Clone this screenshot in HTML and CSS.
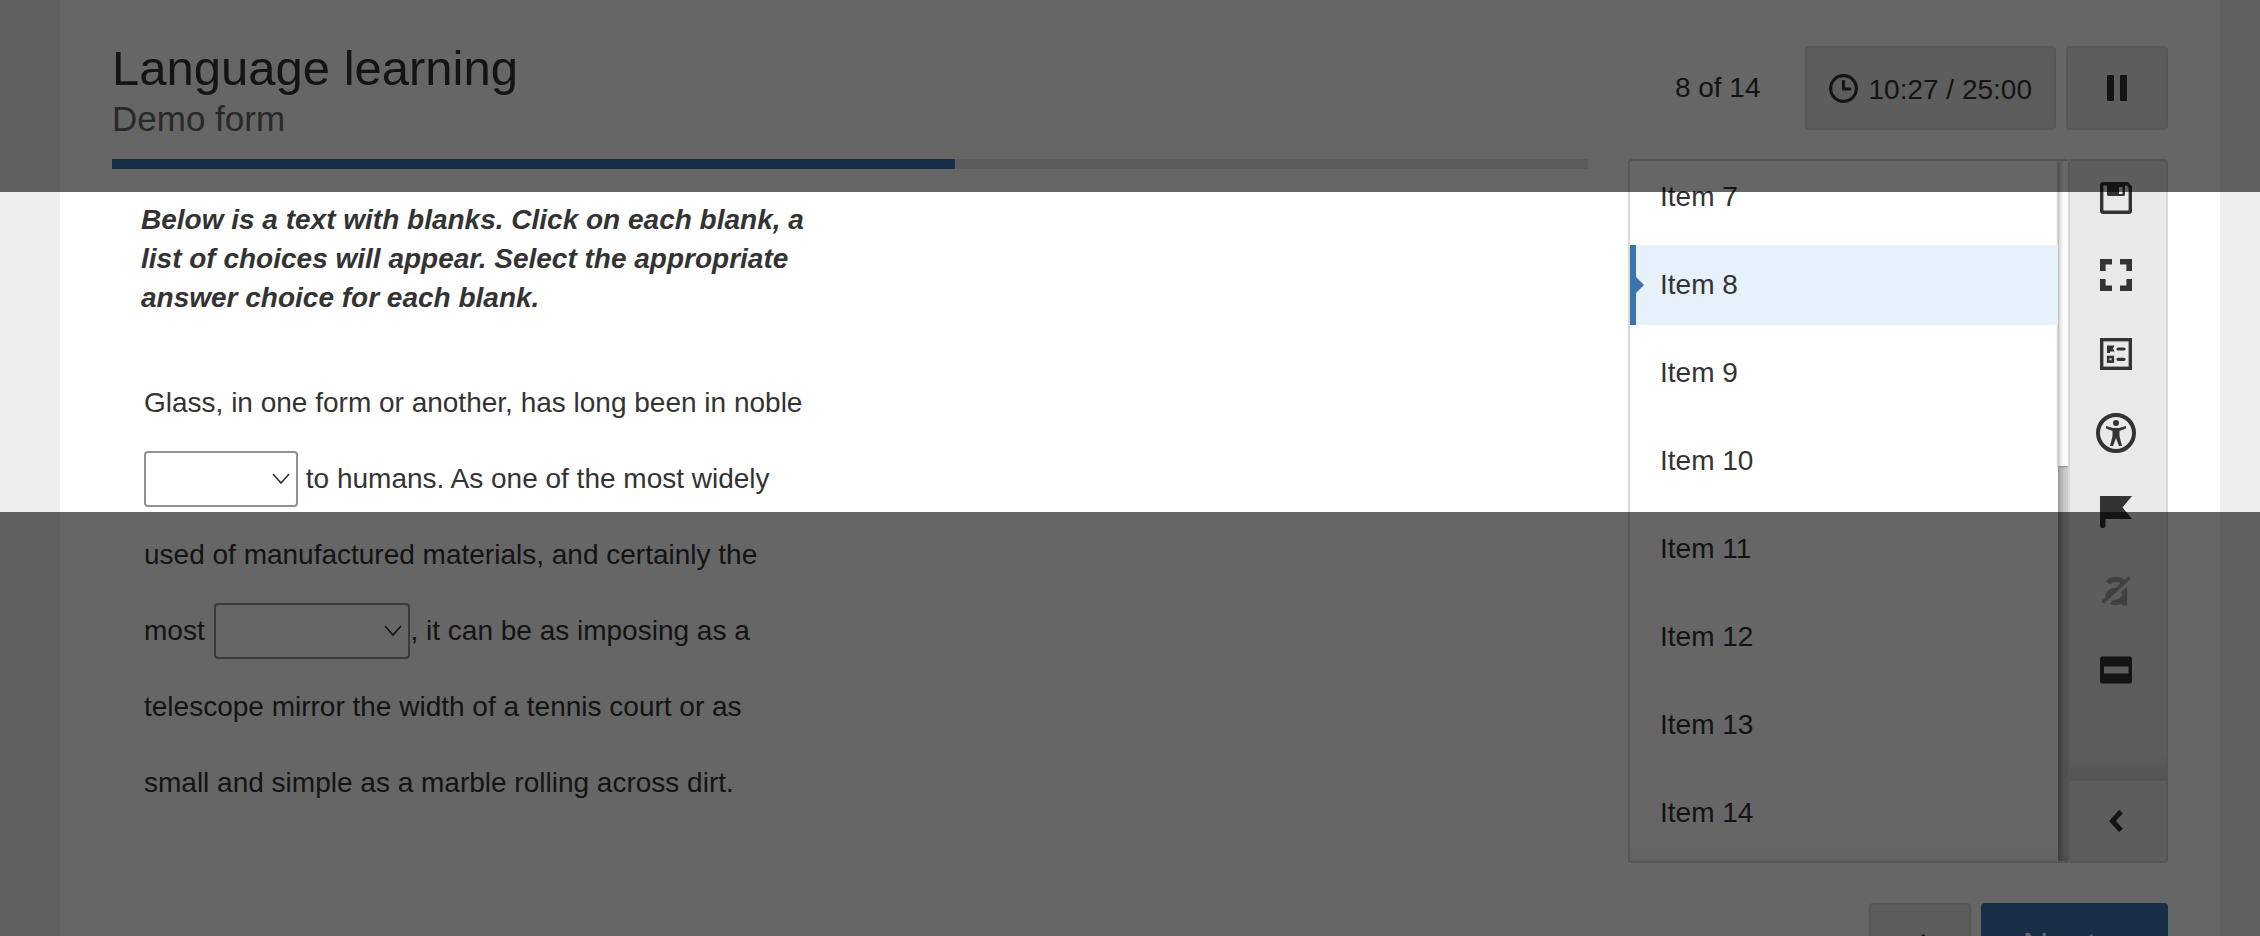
FILE: index.html
```html
<!DOCTYPE html>
<html lang="en">
<head>
<meta charset="utf-8">
<title>Language learning</title>
<link rel="stylesheet" href="styles.css">
</head>
<body>
<div class="page">
  <header class="header">
    <div class="titles">
      <h1 class="title">Language learning</h1>
      <p class="subtitle">Demo form</p>
    </div>
    <div class="status">
      <span class="counter">8 of 14</span>
      <div class="box timer">
        <svg class="clock" viewBox="0 0 28 28" fill="none" stroke="currentColor" stroke-width="3"><circle cx="14" cy="14" r="12.4"/><path d="M14 6v8.5h7.5"/></svg>
        <span class="time">10:27 / 25:00</span>
      </div>
      <button class="box pause" type="button" aria-label="Pause">
        <svg width="20" height="26" viewBox="0 0 20 26" fill="currentColor"><rect width="7" height="26" rx="1"/><rect x="13" width="7" height="26" rx="1"/></svg>
      </button>
    </div>
  </header>

  <div class="body">
    <main class="content">
      <div class="progress"><div class="progress-fill" style="width:57.14%"></div></div>
      <p class="instructions">Below is a text with blanks. Click on each blank, a<br>list of choices will appear. Select the appropriate<br>answer choice for each blank.</p>
      <p class="passage">Glass, in one form or another, has long been in noble<br><span class="blank blank-short"><select aria-label="Blank 1"><option></option></select><svg viewBox="0 0 18 12" fill="none" stroke="currentColor" stroke-width="1.6"><path d="M1 1l8 9 8-9"/></svg></span> to humans. As one of the most widely<br>used of manufactured materials, and certainly the<br>most <span class="blank blank-long"><select aria-label="Blank 2"><option></option></select><svg viewBox="0 0 18 12" fill="none" stroke="currentColor" stroke-width="1.6"><path d="M1 1l8 9 8-9"/></svg></span>, it can be as imposing as a<br>telescope mirror the width of a tennis court or as<br>small and simple as a marble rolling across dirt.</p>
    </main>

    <aside class="side">
      <div class="panel">
        <nav class="items">
          <a class="item" href="#7">Item 7</a>
          <a class="item current" href="#8">Item 8</a>
          <a class="item" href="#9">Item 9</a>
          <a class="item" href="#10">Item 10</a>
          <a class="item" href="#11">Item 11</a>
          <a class="item" href="#12">Item 12</a>
          <a class="item" href="#13">Item 13</a>
          <a class="item" href="#14">Item 14</a>
        </nav>
        <div class="track"><div class="thumb"></div></div>
      </div>
      <div class="toolbar">
        <div class="tools">
          <button class="tool" type="button" aria-label="Save"><svg viewBox="0 0 32 32"><path fill="none" stroke="currentColor" stroke-width="3.400" d="M3 1.700h24.300l3 3.500v23.600q0 1.500-1.500 1.500H3.200q-1.500 0-1.500-1.500V3.200q0-1.500 1.500-1.500z"/><path fill="currentColor" fill-rule="evenodd" d="M7 1h18v11.500q0 1.500-1.500 1.500H8.500Q7 14 7 12.500zM19 5v7h3.500V5z"/></svg></button>
          <button class="tool" type="button" aria-label="Full screen"><svg viewBox="0 0 32 32" fill="none" stroke="currentColor" stroke-width="5.6"><path d="M12 2.800H2.800V12M20 2.800h9.200V12M12 29.200H2.800V20M20 29.200h9.200V20"/></svg></button>
          <button class="tool" type="button" aria-label="Item overview"><svg viewBox="0 0 32 32"><rect x="1.700" y="1.700" width="28.600" height="28.600" fill="none" stroke="currentColor" stroke-width="3.400"/><path fill="currentColor" d="M7 7.500h7.500L13 10.500l1.500 3H10V15H7z"/><rect x="8.200" y="19" width="4.600" height="4.600" fill="none" stroke="currentColor" stroke-width="2.600"/><path d="M18 11h6M18 21.300h6" stroke="currentColor" stroke-width="3.200" stroke-linecap="round"/></svg></button>
          <button class="tool" type="button" aria-label="Accessibility"><svg class="large" viewBox="0 0 40 40"><circle cx="20" cy="20" r="18" fill="none" stroke="currentColor" stroke-width="4"/><circle cx="20" cy="10" r="3" fill="currentColor"/><path fill="currentColor" d="M10 13l7 2h6l7-2v2.500L23.500 18v5L26 33h-3l-3-8-3 8h-3l2.500-10v-5L10 15.500z"/></svg></button>
          <button class="tool" type="button" aria-label="Flag item"><svg viewBox="0 0 32 32" fill="currentColor"><path d="M0 0h32L22.500 11.500 32 23H5.500v6.500a2.750 2.750 0 0 1-5.500 0z"/></svg></button>
          <button class="tool" type="button" aria-label="Answer masking" disabled><svg viewBox="0 0 32 32" fill="none" stroke="currentColor"><path stroke-width="5.500" d="M8 8c3-5 16.500-5.500 16.500 4v18.500"/><path stroke-width="5.500" d="M24 15.500h-8C5.500 15.500 6 27.500 15 27.500q5 0 8.500-4.500"/><path class="knock" stroke-width="3.600" d="M5.500 30L31 5.500"/><path stroke-width="3.600" d="M2.500 27.500L29.500 2.500"/></svg></button>
          <button class="tool" type="button" aria-label="Line reader"><svg viewBox="0 0 32 32" fill="currentColor"><path fill-rule="evenodd" d="M2 2.500h28q2 0 2 2v23q0 2-2 2H2q-2 0-2-2v-23q0-2 2-2zM4 12.500v7h24.500v-7z"/></svg></button>
        </div>
        <button class="collapse" type="button" aria-label="Collapse"><svg width="14" height="22" viewBox="0 0 14 22" fill="none" stroke="currentColor" stroke-width="5"><path d="M12 1.500L3.500 11l8.500 9.500"/></svg></button>
      </div>
    </aside>
  </div>

  <footer class="footer">
    <button class="box prev" type="button" aria-label="Previous"><svg width="14" height="22" viewBox="0 0 14 22" fill="none" stroke="currentColor" stroke-width="5"><path d="M12 1.500L3.500 11l8.500 9.500"/></svg></button>
    <button class="next" type="button">Next <svg width="14" height="22" viewBox="0 0 14 22" fill="none" stroke="currentColor" stroke-width="5"><path d="M2 1.500l8.500 9.500L2 20.500"/></svg></button>
  </footer>
</div>
<div class="shade shade-top"></div>
<div class="shade shade-bottom"></div>
</body>
</html>
```

FILE: styles.css
```css
* { box-sizing: border-box; }

body {
  margin: 0;
  background: #eee;
  color: #333;
  font: 28px/40px "Liberation Sans", Arial, sans-serif;
}

button { font: inherit; color: inherit; cursor: pointer; }
svg { display: block; flex: none; }

.page {
  height: 100vh;
  margin: 0 40px 0 60px;
  padding: 46px 52px 0;
  background: #fff;
  overflow: hidden;
}

.header {
  display: flex;
  justify-content: space-between;
  align-items: flex-start;
  height: 113px;
}

.title { margin: -6px 0 0; font-size: 49px; font-weight: 400; line-height: 56px; }
.subtitle { margin: 0; font-size: 35px; line-height: 46px; color: #666; }

.status { display: flex; align-items: center; gap: 10px; }
.counter { margin-right: 34px; }

.box {
  display: flex;
  align-items: center;
  justify-content: center;
  height: 84px;
  border: 2px solid #dadada;
  border-radius: 4px;
  background: #e9e9e9;
}

.timer { gap: 11px; padding: 0 22px; }
.timer .time { padding-top: 3px; }
.timer .clock { width: 29px; height: 29px; }
.pause { width: 102px; padding: 0; }

.body { display: flex; gap: 40px; }
.content { flex: 1; min-width: 0; }

.progress { height: 10px; background: #e9e9e9; }
.progress-fill { height: 100%; background: #3b73af; }

.instructions {
  margin: 31px 0 0 29px;
  font-weight: 700;
  font-style: italic;
  line-height: 39px;
}

.passage { margin: 48px 0 0 32px; line-height: 76px; }

.blank {
  position: relative;
  display: inline-block;
  height: 56px;
  margin-bottom: 4px;
  vertical-align: middle;
}
.blank-short { width: 154px; }
.blank-long { width: 196px; margin-left: 2px; }
.blank select {
  display: block;
  width: 100%;
  height: 100%;
  border: 2px solid #919191;
  border-radius: 4px;
  background: #fff;
  appearance: none;
}
.blank svg {
  position: absolute;
  top: 22px;
  right: 8px;
  width: 18px;
  height: 12px;
  pointer-events: none;
}

.side { display: flex; height: 704px; }

.panel {
  display: flex;
  width: 440px;
  border: 2px solid #d8d8d8;
  border-right: 0;
  border-radius: 4px 0 0 4px;
  overflow: hidden;
}

.items {
  flex: 1;
  display: flex;
  flex-direction: column;
  justify-content: flex-end;
  gap: 8px;
  padding-bottom: 8px;
  background: linear-gradient(#fff, #fff 680px, #f5f5f5);
}

.item {
  position: relative;
  flex: none;
  padding: 20px 30px;
  color: inherit;
  text-decoration: none;
}
.current { background: #e6f1fb; box-shadow: inset 6px 0 #3b73af; }
.current::after {
  content: "";
  position: absolute;
  top: 32px;
  left: 6px;
  border: 8px solid transparent;
  border-left-color: #3b73af;
  border-right-width: 0;
}

.track {
  width: 10px;
  background: #ccc;
  box-shadow: inset 4px 0 6px -2px #888;
}
.thumb {
  height: 305px;
  background: linear-gradient(90deg, #b8b8b8, #e4e4e4 2px, #fff 6px);
  box-shadow: 0 1px 2px #888;
}

.toolbar {
  display: flex;
  flex-direction: column;
  width: 100px;
  border: 2px solid #d8d8d8;
  border-radius: 4px;
  background: #e9e9e9;
}
.tools {
  flex: 1;
  display: flex;
  flex-direction: column;
  background: linear-gradient(transparent 590px, #d2d2d2);
}
.tool {
  display: flex;
  align-items: center;
  justify-content: center;
  height: 79px;
  padding: 0 4px 0 0;
  border: 0;
  background: none;
}
.tool:first-child { height: 74px; }
.tool svg { width: 32px; height: 32px; }
.tool .large { width: 40px; height: 40px; }
.tool:disabled { color: #a0a0a0; }
.knock { stroke: #e9e9e9; }

.collapse {
  display: flex;
  align-items: center;
  justify-content: center;
  height: 80px;
  padding: 0 4px 0 0;
  border: 0;
  background: #e9e9e9;
}

.footer {
  display: flex;
  justify-content: flex-end;
  gap: 10px;
  padding-top: 40px;
}
.footer .prev { width: 102px; }
.next {
  display: flex;
  align-items: center;
  justify-content: center;
  gap: 12px;
  width: 187px;
  height: 84px;
  padding: 4px 4px 0 0;
  border: 0;
  border-radius: 4px;
  background: #3b73af;
  color: #fff;
  font-size: 36px;
}

.shade {
  position: fixed;
  left: 0;
  right: 0;
  background: rgba(0, 0, 0, 0.6);
  pointer-events: none;
}
.shade-top { top: 0; height: 192px; }
.shade-bottom { top: 512px; bottom: 0; }
```
